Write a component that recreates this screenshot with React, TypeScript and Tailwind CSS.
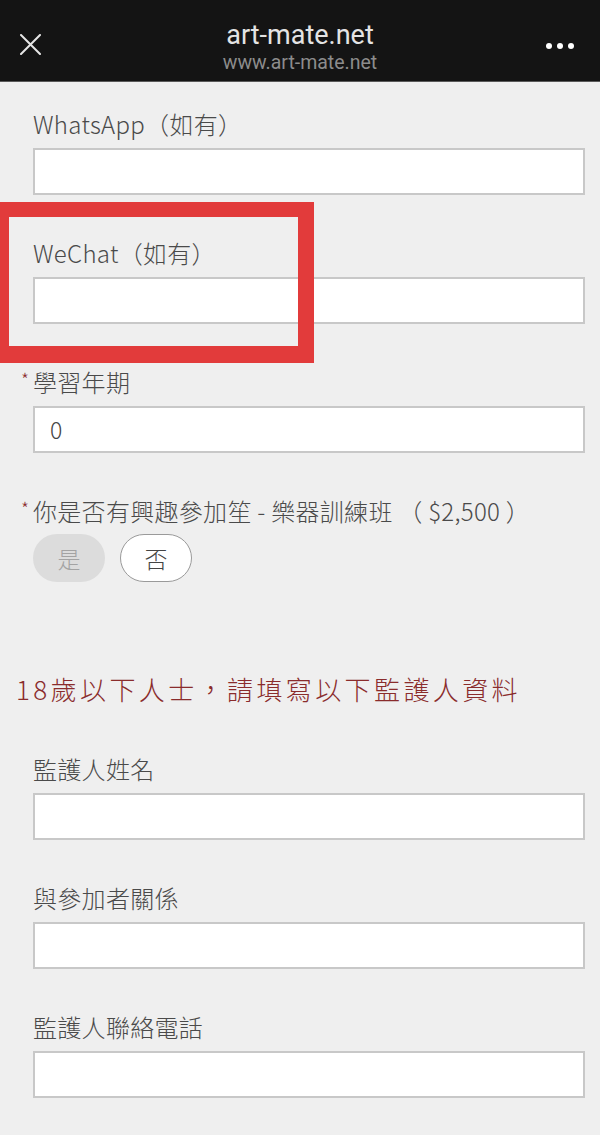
import React from "react";

const cjk = "font-['Noto_Sans_CJK_TC','Noto_Sans_CJK_SC',sans-serif]";

function Field({ label, required, value }: { label: string; required?: boolean; value?: string }) {
  return (
    <div className="flex flex-col">
      <div className="relative h-[32px] leading-[32px] text-[24px] tracking-[0.3px] text-[#4a4a4a] font-light whitespace-nowrap">
        {required && (
          <span className="absolute left-[-12px] top-[-3px] text-[18px] text-[#8a2c2c]">*</span>
        )}
        {label}
      </div>
      <div className="mt-[8px] h-[47px] bg-white border-2 border-[#c8c8c8] flex items-center pl-[15px] text-[23px] text-[#444] font-light">
        {value}
      </div>
    </div>
  );
}

export default function App() {
  return (
    <div className={`relative w-[600px] h-[1135px] overflow-hidden bg-[#efefef] ${cjk}`}>
      <div className="h-[82px] bg-[#141414] border-b border-[#5a5a5a] grid grid-cols-[1fr_auto_1fr] items-center px-[20px]">
        <svg width="21" height="21" viewBox="0 0 21 21" className="mt-[8px]">
          <path d="M1 1L20 20M20 1L1 20" stroke="#e6e6e6" strokeWidth="2" strokeLinecap="round" />
        </svg>
        <div className="flex flex-col items-center font-['Roboto',sans-serif] pt-[12px]">
          <div className="text-[27px] leading-[32px] text-[#e4e4e4]">art-mate.net</div>
          <div className="text-[19.5px] leading-[24px] text-[#8c8c8c]">www.art-mate.net</div>
        </div>
        <div className="flex justify-end gap-[5px] mt-[10px] mr-[6px]">
          <span className="w-[6px] h-[6px] rounded-full bg-white" />
          <span className="w-[6px] h-[6px] rounded-full bg-white" />
          <span className="w-[6px] h-[6px] rounded-full bg-white" />
        </div>
      </div>

      <div className="pl-[33px] pr-[15px] pt-[26px] flex flex-col">
        <div className="flex flex-col gap-[42px]">
          <Field label="WhatsApp（如有）" />
          <Field label="WeChat（如有）" />
          <Field label="學習年期" required value="0" />
        </div>

        <div className="mt-[42px] flex flex-col">
          <div className="relative h-[32px] leading-[32px] text-[24px] tracking-[0.3px] text-[#4a4a4a] font-light whitespace-nowrap">
            <span className="absolute left-[-12px] top-[-3px] text-[18px] text-[#8a2c2c]">*</span>
            你是否有興趣參加笙 - 樂器訓練班 （ $2,500 ）
          </div>
          <div className="mt-[7px] flex gap-[15px]">
            <div className="w-[72px] h-[48px] rounded-[24px] bg-[#dcdcdc] flex items-center justify-center text-[23px] text-[#a3a3a3] font-light">
              是
            </div>
            <div className="w-[72px] h-[48px] rounded-[24px] bg-white border border-[#9a9a9a] flex items-center justify-center text-[23px] text-[#444] font-light">
              否
            </div>
          </div>
        </div>

        <div className="mt-[89px] -ml-[17px] h-[36px] leading-[36px] text-[26px] tracking-[3.4px] text-[#8a2c2c] font-light whitespace-nowrap">
          18歲以下人士，請填寫以下監護人資料
        </div>

        <div className="mt-[46px] flex flex-col gap-[42px]">
          <Field label="監護人姓名" />
          <Field label="與參加者關係" />
          <Field label="監護人聯絡電話" />
        </div>
      </div>

      <div className="absolute left-[-7px] top-[202px] w-[321px] h-[161px] border-t-[15px] border-r-[16px] border-b-[17px] border-l-[16px] border-[#e23b3b]" />
    </div>
  );
}
